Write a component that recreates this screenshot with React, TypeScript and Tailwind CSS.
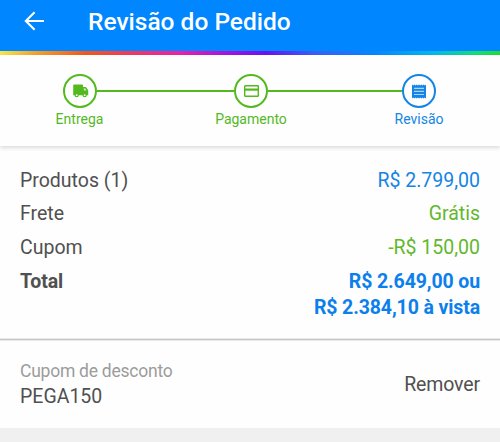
import type { ReactNode } from "react";

function Step({ label, color, children }: { label: string; color: string; children: ReactNode }) {
  return (
    <div className={`flex w-[34px] shrink-0 flex-col items-center ${color}`}>
      <div className="flex size-[34px] items-center justify-center rounded-full border-2 border-current">{children}</div>
      <span className="mt-[3px] whitespace-nowrap text-[14px] leading-4">{label}</span>
    </div>
  );
}

function Row({ label, value, color }: { label: string; value: string; color: string }) {
  return (
    <div className="flex h-[33.7px] justify-between">
      <span>{label}</span>
      <span className={color}>{value}</span>
    </div>
  );
}

export default function App() {
  return (
    <div className="flex h-[442px] w-[500px] flex-col overflow-hidden bg-[#f0f0f0] font-[Roboto,sans-serif] text-[#505050]">
      <header className="flex h-[51px] shrink-0 items-start bg-[#0086ff] text-white">
        <svg className="ml-[22px] mt-[9px] size-6" viewBox="0 0 24 24" fill="none" stroke="currentColor" strokeWidth="2.1">
          <path d="M22 12H3.8M12.6 3.2L3.8 12l8.800 8.800" />
        </svg>
        <h1 className="ml-[42px] mt-[8px] text-[24.500px] font-medium leading-7">Revisão do Pedido</h1>
      </header>
      <div className="h-1 shrink-0 bg-[linear-gradient(90deg,#f4e74c_0%,#f5a22d_7%,#f05a1c_17%,#f03a5c_26%,#ee1fa8_36%,#a416dc_45%,#6a12ee_53%,#3760f5_63%,#0786ff_75%,#05b9e8_87%,#14dc78_95%,#20dc38_100%)]" />
      <section className="relative h-[91px] shrink-0 bg-[#fefefe] shadow-[0_2px_4px_rgba(0,0,0,0.14)]">
        <div className="flex items-start pl-[62.500px] pt-[19px]">
          <Step label="Entrega" color="text-[#54b91e]">
            <svg className="size-[18px]" viewBox="0 0 18 18" fill="currentColor">
              <path d="M3 2.500h8a1 1 0 0 1 1 1V5h2.200c.5 0 .8.2 1.100.6l1.900 2.700v4.900H2.200V3.500c0-.6.3-1 .8-1z" />
              <path d="M12.800 6.200h1.300L15.700 8.500h-2.900z" fill="#c4e8ae" />
              <circle cx="5.700" cy="13" r="2.200" />
              <circle cx="13.700" cy="13" r="2.200" />
              <circle cx="5.700" cy="13.200" r="0.900" fill="#fff" />
              <circle cx="13.700" cy="13.200" r="0.900" fill="#fff" />
            </svg>
          </Step>
          <div className="mt-4 h-[2px] w-[137.500px] bg-[#54b91e]" />
          <Step label="Pagamento" color="text-[#54b91e]">
            <svg className="h-3 w-[15px]" viewBox="0 0 15 12" fill="none" stroke="currentColor">
              <rect x="0.700" y="0.700" width="13.600" height="10.600" rx="0.600" strokeWidth="1.400" />
              <path d="M1 4.600h13" strokeWidth="2.200" />
            </svg>
          </Step>
          <div className="mt-4 h-[2px] w-[134px] bg-[#54b91e]" />
          <Step label="Revisão" color="text-[#1485e4]">
            <svg className="h-[15px] w-[14px]" viewBox="0 0 14 15">
              <path d="M0 .5l1.200 1L2.300.5l1.200 1 1.200-1 1.100 1 1.200-1 1.200 1 1.100-1 1.200 1 1.200-1 1.100 1L14 .5v14l-1.200-1-1.100 1-1.200-1-1.200 1-1.100-1-1.200 1-1.200-1-1.100 1-1.200-1-1.200 1-1.100-1L0 14.500z" fill="currentColor" />
              <path d="M2 4.300h10M2 7.400h10M2 10.500h10" stroke="#a9d6fb" strokeWidth="1.200" />
            </svg>
          </Step>
        </div>
      </section>
      <section className="h-[192px] shrink-0 bg-[#fefefe] px-5 pt-[21.800px] text-[19.500px] leading-[26px]">
        <Row label="Produtos (1)" value="R$ 2.799,00" color="text-[#1485e4]" />
        <Row label="Frete" value="Grátis" color="text-[#62b82c]" />
        <Row label="Cupom" value="-R$ 150,00" color="text-[#62b82c]" />
        <div className="flex justify-between font-bold tracking-[-0.12px]">
          <span>Total</span>
          <p className="text-right text-[#0b80ec]">R$ 2.649,00 ou<br />R$ 2.384,10 à vista</p>
        </div>
      </section>
      <div className="h-[3px] shrink-0 border-y border-[#e8e8e8] bg-[#c6c6c6]" />
      <section className="flex h-[87px] shrink-0 items-start justify-between bg-[#fefefe] px-5">
        <div className="pt-[17px]">
          <p className="text-[17.500px] leading-[26px] tracking-[-0.240px] text-[#9c9c9c]">Cupom de desconto</p>
          <p className="text-[19.500px] leading-[26px]">PEGA150</p>
        </div>
        <button className="mt-[31px] text-[19.500px] leading-[26px] tracking-[-0.120px]">Remover</button>
      </section>
    </div>
  );
}
